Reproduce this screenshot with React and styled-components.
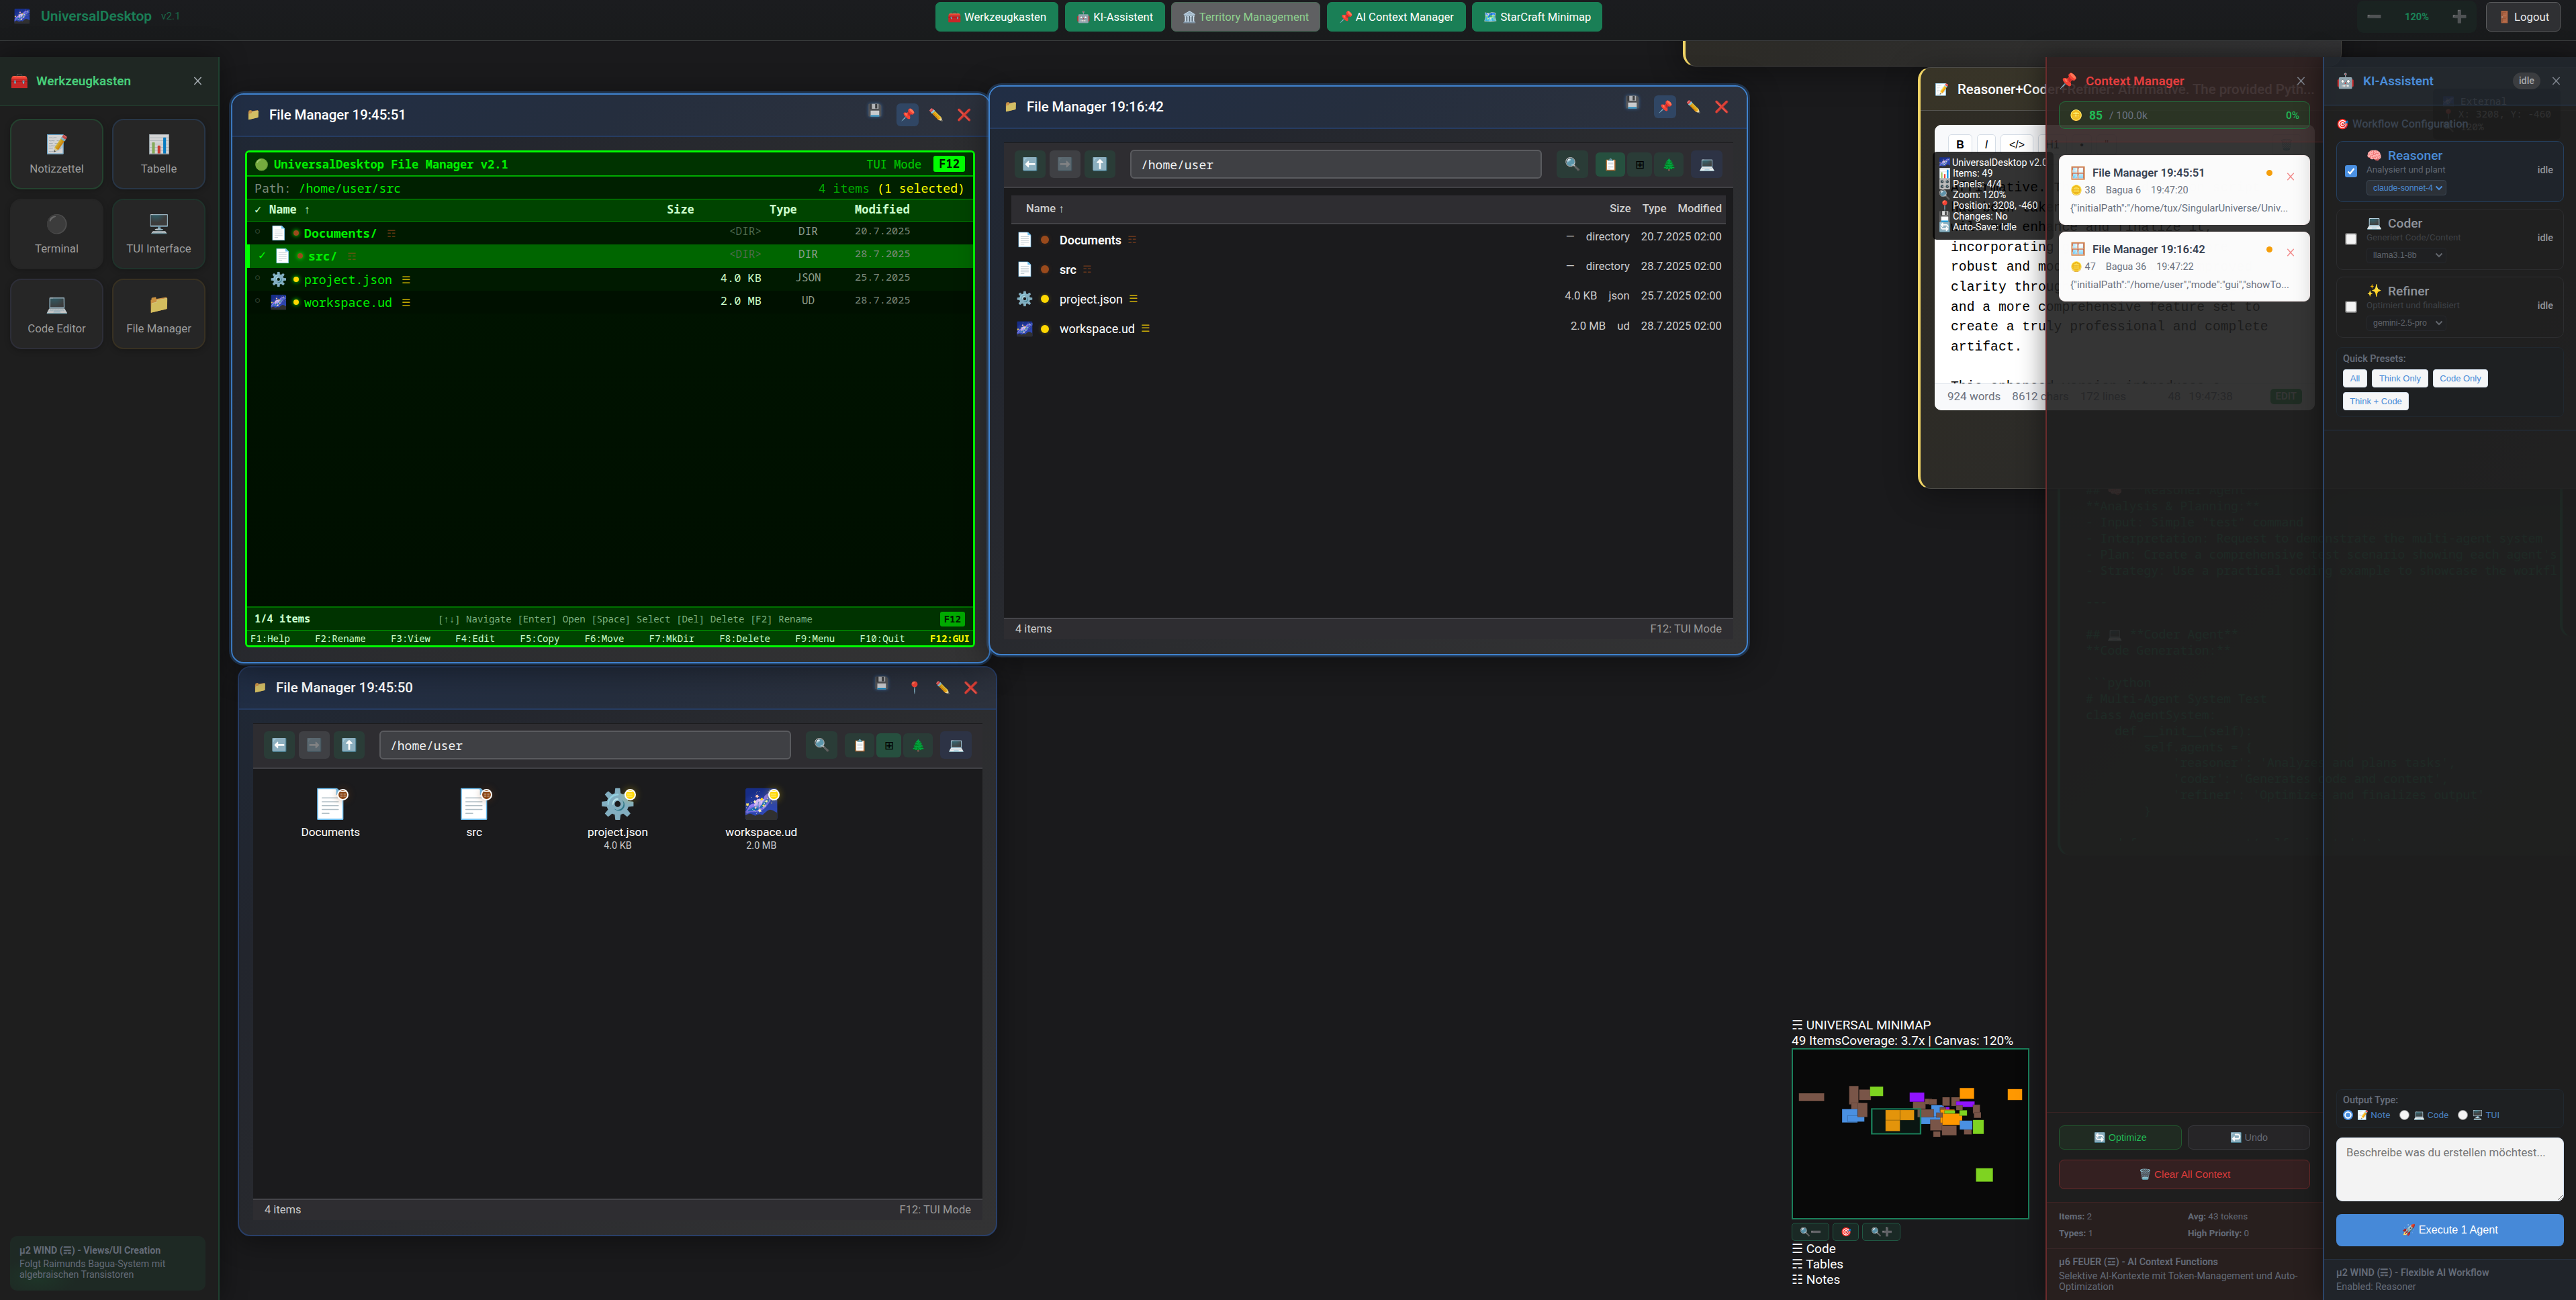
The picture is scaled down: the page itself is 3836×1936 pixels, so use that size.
import React from 'react';
import styled, { createGlobalStyle, css } from 'styled-components';

const SANS = `Roboto, "Liberation Sans", sans-serif`;
const FORM = `"Liberation Sans", Arial, sans-serif`;
const MONO = `"Noto Sans Mono", "DejaVu Sans Mono", monospace`;

const Global = createGlobalStyle`
  *, *::before, *::after { box-sizing: border-box; }
  html, body, #root { height: 100%; margin: 0; }
  body { background: #1a1a1c; color: #fff; font-family: ${SANS}; overflow: hidden; }
  button, input, textarea { font: inherit; color: inherit; margin: 0; }
`;

/* ---------- shell ---------- */
const Screen = styled.div`
  position: relative;
  width: 100%;
  height: 100vh;
  overflow: hidden;
`;
const Canvas = styled.main`
  position: absolute;
  inset: 0;
  overflow: hidden;
`;
const Chrome = styled.div`
  position: absolute;
  inset: 0;
  display: flex;
  flex-direction: column;
  gap: 24px;
`;
const PanelRow = styled.div`
  flex: 1;
  min-height: 0;
  display: flex;
`;
const Spacer = styled.div`
  flex: 1;
`;

/* ---------- top bar ---------- */
const TopBar = styled.header`
  height: 61px;
  display: grid;
  grid-template-columns: 1393px auto 1fr;
  align-items: start;
  background: linear-gradient(180deg, #1b1c1f, #191b1c);
  border-bottom: 1px solid #3a3c3d;
`;
const Brand = styled.div`
  display: flex;
  align-items: center;
  height: 48px;
  padding-left: 20px;
  color: #1a7f56;
  font-size: 21px;
  font-weight: 600;
`;
const BrandIcon = styled.span`
  font-size: 20.5px;
  width: 41px;
`;
const Version = styled.span`
  margin-left: 14px;
  font-size: 15.3px;
  font-weight: 400;
  opacity: 0.75;
`;
const Nav = styled.nav`
  display: flex;
  gap: 9.6px;
  padding-top: 3px;
`;
const NavButton = styled.button`
  height: 44px;
  width: ${(p) => p.$w}px;
  padding: 0;
  border: 1px solid ${(p) => (p.$muted ? '#4a6a58' : '#1a7f56')};
  border-radius: 7px;
  background: ${(p) => (p.$muted ? '#5f6062' : '#1a7f56')};
  color: ${(p) => (p.$muted ? '#8fd18f' : '#fff')};
  font-size: 16.6px;
  white-space: nowrap;
`;
const TopRight = styled.div`
  display: flex;
  justify-content: flex-end;
  gap: 14px;
  padding-right: 23px;
`;
const ZoomBox = styled.div`
  display: flex;
  align-items: center;
  justify-content: space-between;
  width: 178px;
  height: 48px;
  margin-top: 1px;
  padding: 0 14px;
  border-radius: 9px;
  background: #1a2321;
  color: #1a8458;
  font-size: 14.6px;
  font-weight: 700;
`;
const ZoomGlyph = styled.span`
  font-size: 18.5px;
  opacity: 0.75;
`;
const Logout = styled.button`
  width: 111px;
  height: 44px;
  margin-top: 3px;
  padding: 0;
  border: 1px solid #5a5b5d;
  border-radius: 7px;
  background: #2f3033;
  color: #e8e8e8;
  font-size: 16.8px;
`;

/* ---------- toolbox panel ---------- */
const Toolbox = styled.aside`
  width: 327px;
  display: flex;
  flex-direction: column;
  background: #1e1e1e;
  border-right: 2px solid #1f4030;
  box-shadow: 0 0 38px rgba(0, 0, 0, 0.45);
`;
const ToolboxHead = styled.div`
  height: 73px;
  display: flex;
  align-items: center;
  padding: 0 24px 2px 15px;
  background: #1f2723;
  border-bottom: 1px solid #22402f;
  color: #48cf7a;
  font-size: 18.9px;
  font-weight: 600;
`;
const HeadIcon = styled.span`
  font-size: ${(p) => p.$size || 22}px;
  width: ${(p) => p.$w}px;
  font-weight: 400;
`;
const Cross = styled.svg`
  width: ${(p) => p.$s || 14}px;
  height: ${(p) => p.$s || 14}px;
  flex: none;
  margin-left: ${(p) => (p.$gap ? `${p.$gap}px` : 'auto')};
  stroke: ${(p) => p.$color || '#a4abb0'};
  stroke-width: 1.7;
`;
const ToolGrid = styled.div`
  display: grid;
  grid-template-columns: 139px 139px;
  grid-auto-rows: 105px;
  gap: 14.2px 13px;
  padding: 19px 15px;
`;
const Tool = styled.div`
  display: flex;
  flex-direction: column;
  align-items: center;
  justify-content: center;
  gap: 10px;
  border: 2px solid ${(p) => p.$edge};
  border-radius: 17px;
  background: #262626;
  color: #9c9c9c;
  font-size: 16.8px;
  box-shadow: 0 2px 8px rgba(0, 0, 0, 0.25);
`;
const ToolIcon = styled.span`
  font-size: 27px;
  line-height: 32px;
  opacity: 0.8;
`;
const Motto = styled.div`
  margin: auto 19px 14px 15px;
  padding: 12px 14px 14px;
  height: 81px;
  border-radius: 10px;
  background: radial-gradient(ellipse 45px 22px at 14% 76%, #1e3528, #1e2924 130%);
  color: #646b78;
  font-size: 14.2px;
  line-height: 16px;
  white-space: nowrap;
  b { display: block; line-height: 19px; margin-bottom: 2px; }
`;

/* ---------- windows ---------- */
const WindowFrame = styled.section`
  position: absolute;
  left: ${(p) => p.$x}px;
  top: ${(p) => p.$y}px;
  width: 1131px;
  height: 849px;
  display: flex;
  flex-direction: column;
  border: ${(p) => (p.$pinned ? '2px solid #4083cf' : '2px solid #293f69')};
  border-radius: 19px;
  background: linear-gradient(135deg, #202937 0%, #23262e 22%, #2b2c2f 55%, #333334 100%);
  box-shadow: ${(p) =>
    p.$pinned
      ? '0 0 0 3px rgba(64, 131, 207, 0.28), 0 8px 48px rgba(0, 0, 0, 0.45)'
      : '0 8px 40px rgba(0, 0, 0, 0.4)'};
`;
const WindowHead = styled.div`
  height: 63px;
  flex: none;
  display: flex;
  align-items: center;
  padding: 0 26px 2px 21px;
  border-bottom: 2px solid #263c62;
  border-radius: 17px 17px 0 0;
  background: linear-gradient(135deg, #212e45, #252e3e 50%, #2d323d);
  font-size: 20.4px;
  font-weight: 500;
`;
const FolderIcon = styled.span`
  font-size: 16.5px;
  width: 34px;
  opacity: 0.8;
`;
const WindowTools = styled.div`
  display: flex;
  align-items: center;
  margin-left: auto;
  font-size: 17.5px;
  font-weight: 400;
`;
const SaveGlyph = styled.span`
  padding-bottom: 13px;
  margin-right: 21px;
  opacity: 0.75;
  text-shadow: 0 0 5px rgba(64, 131, 207, 0.8);
`;
const PinGlyph = styled.span`
  display: grid;
  place-items: center;
  width: 33px;
  height: 34px;
  margin-right: 15px;
  border-radius: 6px;
  background: ${(p) => (p.$on ? '#304664' : 'transparent')};
`;
const ToolGlyph = styled.span`
  opacity: 0.9;
  width: 22px;
  & + & { margin-left: 20px; }
`;
const WindowBody = styled.div`
  flex: 1;
  min-height: 0;
  margin: 20px 20px 22px 21px;
  display: flex;
  flex-direction: column;
`;

/* ---------- graphic file manager ---------- */
const Explorer = styled.div`
  flex: 1;
  display: flex;
  flex-direction: column;
  background: #1b1b1d;
`;
const Toolbar = styled.div`
  height: 68px;
  flex: none;
  display: flex;
  align-items: center;
  padding: 0 16px 2px;
  background: #2e2d31;
  border-top: 1px solid #1c1c1e;
  border-bottom: 2px solid #414145;
`;
const BarButton = styled.button`
  display: grid;
  place-items: center;
  padding: 0;
  border: 0;
  border-radius: 6px;
  flex: none;
  width: ${(p) => p.$w || 46}px;
  height: ${(p) => p.$h || 41}px;
  margin-right: ${(p) => p.$mr || 0}px;
  font-size: ${(p) => p.$fs || 19.2}px;
  color: #000;
  background: ${(p) =>
    ({ green: '#2a3c37', on: '#26503f', off: '#3f4044', blue: '#2d3345' })[p.$tone]};
  span { opacity: ${(p) => (p.$tone === 'off' ? 0.35 : 1)}; }
`;
const PathField = styled.input`
  width: 615px;
  height: 43px;
  margin: 0 22px;
  padding: 0 14px;
  border: 2px solid #5a5b5f;
  border-radius: 6px;
  background: #3f4044;
  color: #f2f2f2;
  font-family: ${MONO};
  font-size: 18px;
`;
const StatusBar = styled.div`
  height: 32px;
  flex: none;
  margin-top: auto;
  display: flex;
  justify-content: space-between;
  align-items: center;
  padding: 0 17px 2px;
  background: #2e2d31;
  border-top: 2px solid #45454a;
  color: #ccc;
  font-size: 16.5px;
  span + span { color: #999; }
`;
const Listing = styled.div`
  margin: 11px 11px 0;
`;
const ListHead = styled.div`
  height: 43px;
  display: flex;
  align-items: center;
  gap: 17px;
  padding: 0 6px 2px 22px;
  margin-bottom: 1px;
  background: #2e2d31;
  border-bottom: 2px solid #434347;
  color: #cfcfcf;
  font-size: 16.6px;
  font-weight: 500;
  span:first-child { margin-right: auto; }
`;
const ListRow = styled.div`
  height: 44.2px;
  display: flex;
  align-items: center;
  padding: 0 6px;
  font-size: 18px;
  font-weight: ${(p) => (p.$dir ? 600 : 400)};
`;
const FileLabel = styled.span`
  margin: 0 9px 0 16px;
`;
const RowIcon = styled.span`
  width: 28px;
  margin-right: 10px;
  font-size: 20.8px;
  font-weight: 400;
  text-align: center;
`;
const Dot = styled.i`
  width: ${(p) => p.$d || 12}px;
  height: ${(p) => p.$d || 12}px;
  border-radius: 50%;
  background: ${(p) => p.$c};
  box-shadow: 0 0 6px ${(p) => p.$glow || 'transparent'};
  flex: none;
`;
const Trigram = styled.span`
  color: ${(p) => p.$c};
  font-size: 14.5px;
  font-weight: 400;
  opacity: ${(p) => (p.$dim ? 0.6 : 0.75)};
  margin-left: ${(p) => p.$ml || 0}px;
`;
const RowMeta = styled.span`
  display: flex;
  gap: 17px;
  margin-left: auto;
  padding-bottom: 9px;
  color: #cdcdcd;
  font-size: 16.7px;
  font-weight: 400;
`;
const IconGrid = styled.div`
  display: grid;
  grid-template-columns: repeat(5, 1fr);
  gap: 19.2px;
  padding: 21px 18px;
`;
const IconCell = styled.div`
  display: flex;
  flex-direction: column;
  align-items: center;
  font-size: 17.2px;
  line-height: 21px;
  small { font-size: 14.4px; color: #ccc; line-height: 20px; }
`;
const BigIcon = styled.div`
  position: relative;
  font-size: 43px;
  line-height: 62px;
  height: 63px;
`;
const Badge = styled.span`
  position: absolute;
  right: 0;
  top: 9px;
  width: 17px;
  height: 17px;
  display: grid;
  place-items: center;
  border: 2px solid #fff;
  border-radius: 50%;
  background: ${(p) => p.$c};
  box-shadow: 0 0 12px ${(p) => p.$c}66;
  color: #fff;
  font-size: 10.5px;
  line-height: 1;
`;

/* ---------- text mode file manager ---------- */
const Tui = styled.div`
  flex: 1;
  display: flex;
  flex-direction: column;
  margin: 0 1px 0 -2px;
  border: 3px solid #00ff00;
  border-radius: 6px;
  background: linear-gradient(180deg, #001500, #000e00);
  font-family: ${MONO};
  font-size: 18.2px;
  color: #00f000;
  overflow: hidden;
  white-space: pre;
`;
const TuiBar = styled.div`
  flex: none;
  display: flex;
  align-items: center;
  height: ${(p) => p.$h}px;
  margin-top: ${(p) => (p.$last ? 'auto' : 0)};
  padding: 0 ${(p) => p.$pr ?? 12}px 0 ${(p) => p.$pl ?? 11}px;
  background: ${(p) => p.$bg};
  border-top: ${(p) => p.$top || 'none'};
  border-bottom: ${(p) => p.$bottom || 'none'};
  font-size: ${(p) => p.$fs || 18.2}px;
  justify-content: space-between;
`;
const Ink = styled.span`
  color: ${(p) => p.$c};
  font-weight: ${(p) => (p.$bold ? 700 : 400)};
  font-size: ${(p) => (p.$fs ? `${p.$fs}px` : 'inherit')};
`;
const TuiTitle = styled.b`
  display: flex;
  gap: 8px;
  i { font-style: normal; font-size: 17px; opacity: 0.95; }
`;
const TuiMode = styled.span`
  margin: 0 18px 0 auto;
  color: #00c000;
  font-weight: 500;
`;
const Key = styled.b`
  padding: 0 ${(p) => p.$px || 8}px;
  line-height: ${(p) => p.$h}px;
  border-radius: 3px;
  background: ${(p) => p.$bg};
  color: #001a00;
`;
const Columns = styled.div`
  display: grid;
  grid-template-columns: 22px 1fr 150px 139px 176px;
  height: ${(p) => p.$h}px;
  flex: none;
  padding-left: ${(p) => (p.$sel ? 13 : 11)}px;
  background: ${(p) => p.$bg};
  border-left: ${(p) => (p.$sel ? '4px solid #00ff00' : 'none')};
  border-bottom: ${(p) => p.$line || 'none'};
  ${(p) =>
    p.$head &&
    css`
      align-items: center;
      padding-bottom: 3px;
      color: #ccffcc;
      font-size: 17px;
      font-weight: 700;
    `}
`;
const TuiCell = styled.span`
  padding-top: 3px;
  text-align: ${(p) => p.$align || 'left'};
  color: ${(p) => p.$c};
  font-size: ${(p) => p.$fs}px;
`;
const TuiHeadCell = styled.span`
  padding-left: ${(p) => p.$pl || 0}px;
`;
const TuiName = styled.span`
  display: flex;
  align-items: center;
  gap: 8px;
  font-weight: ${(p) => (p.$dir ? 700 : 400)};
`;
const TuiIcon = styled.span`
  width: 28px;
  text-align: center;
  font-family: ${SANS};
  font-size: 20.5px;
  font-weight: 400;
`;

/* ---------- notes ---------- */
const NoteFrame = styled.section`
  position: absolute;
  left: ${(p) => p.$x}px;
  top: ${(p) => p.$y}px;
  width: ${(p) => p.$w}px;
  height: ${(p) => p.$h}px;
  border: 1px solid #4c4b47;
  border-left: 4px solid #efd365;
  border-radius: 19px;
  background: linear-gradient(120deg, #2f2c24 0%, #2c2b28 35%, #343436 100%);
  box-shadow: 0 8px 48px rgba(0, 0, 0, 0.4);
`;
const NoteHead = styled.div`
  height: 64px;
  display: flex;
  align-items: center;
  padding-left: 21px;
  border-bottom: 1px solid #55544f;
  border-radius: 15px 15px 0 0;
  background: rgba(239, 211, 101, 0.05);
  font-size: 20.4px;
  font-weight: 500;
  white-space: nowrap;
`;
const NoteCard = styled.div`
  width: 566px;
  height: 425px;
  margin: 21px 0 0 21px;
  display: flex;
  flex-direction: column;
  border-radius: 10px;
  background: #fff;
  overflow: hidden;
  color: #000;
`;
const NoteTools = styled.div`
  height: 60px;
  flex: none;
  display: flex;
  align-items: center;
  gap: 7px;
  padding: 0 20px;
  background: #f8f9fb;
  border-bottom: 1px solid #dde3ea;
`;
const NoteButton = styled.span`
  height: 31px;
  width: ${(p) => p.$w}px;
  display: grid;
  place-items: center;
  border: 1px solid #d5dde6;
  border-radius: 5px;
  background: #fff;
  font-size: 16px;
  font-family: ${FORM};
  margin-left: ${(p) => (p.$push ? 'auto' : 0)};
`;
const NoteText = styled.pre`
  flex: 1;
  min-height: 0;
  margin: 0;
  padding: 20px 24px 0;
  overflow: hidden;
  font-family: "Liberation Mono", monospace;
  font-size: 19.7px;
  line-height: 29.6px;
`;
const NoteFoot = styled.div`
  height: 40px;
  flex: none;
  display: flex;
  align-items: center;
  padding: 0 19px 3px;
  background: #f8f9fb;
  border-top: 1px solid #dde3ea;
  color: #6b7280;
  font-size: 17px;
  span { margin-right: 17px; }
  span:nth-child(4) { margin: 0 12px 0 45px; }
`;
const EditTag = styled.b`
  margin-left: auto;
  padding: 0 8px;
  line-height: 23px;
  border-radius: 5px;
  background: #22a04a;
  color: #fff;
  font-size: 15px;
  font-weight: 500;
`;
const CodeFrame = styled.section`
  position: absolute;
  left: ${(p) => p.$x}px;
  top: ${(p) => p.$y}px;
  width: 1131px;
  height: ${(p) => p.$h}px;
  padding: ${(p) => p.$pad || '0'};
  border-left: 4px solid #1a7f56;
  border-bottom: 1px solid #2f3a34;
  border-radius: 19px;
  background: linear-gradient(135deg, #1e1e1e, #20302a 60%, #1e1e1e);
  overflow: hidden;
`;
const Code = styled.pre`
  height: 100%;
  margin: 0;
  overflow: hidden;
  font-family: ${MONO};
  font-size: 18px;
  line-height: 23.9px;
  color: #1a8a5c;
`;
const HudBox = styled.div`
  position: absolute;
  left: ${(p) => p.$x}px;
  top: ${(p) => p.$y}px;
  width: ${(p) => p.$w}px;
  height: ${(p) => p.$h}px;
  padding: ${(p) => p.$pad};
  border-radius: 6px;
  background: rgba(0, 0, 0, 0.8);
  font-family: ${(p) => (p.$mono ? MONO : SANS)};
  font-size: 14.4px;
  line-height: ${(p) => p.$lh}px;
  color: ${(p) => (p.$mono ? '#c8ccd4' : '#fff')};
  white-space: nowrap;
`;
const HudLine = styled.div`
  display: flex;
  height: ${(p) => p.$h}px;
  span { width: ${(p) => p.$icon}px; }
`;

/* ---------- minimap ---------- */
const Minimap = styled.section`
  position: absolute;
  left: 2668px;
  top: 1515px;
  width: 354px;
  font-size: 19px;
  line-height: 23px;
  white-space: nowrap;
`;
const MapSvg = styled.svg`
  display: block;
  width: 354px;
  height: 255px;
  border: 2px solid #1a7f5a;
  background: #090909;
`;
const MapButtons = styled.div`
  display: flex;
  gap: 5px;
  margin: 5px 0 0;
`;
const MapButton = styled.span`
  width: ${(p) => p.$w}px;
  height: 27px;
  display: grid;
  place-items: center;
  border: 1px solid #205843;
  border-radius: 5px;
  background: #1a2925;
  font-size: 13px;
`;

/* ---------- context panel ---------- */
const SidePanel = styled.aside`
  width: ${(p) => p.$w}px;
  display: flex;
  flex-direction: column;
  flex: none;
  border-left: 2px solid ${(p) => p.$edge};
  background: rgba(31, 31, 31, 0.9);
  box-shadow: -4px 0 34px rgba(0, 0, 0, 0.4);
`;
const ContextHead = styled.div`
  height: 127px;
  flex: none;
  padding: 12px 19px 0 18px;
  background: rgba(229, 62, 62, 0.08);
  border-bottom: 1px solid #632b2c;
`;
const PanelTitle = styled.div`
  display: flex;
  align-items: center;
  height: ${(p) => p.$h}px;
  padding-right: ${(p) => p.$pr || 0}px;
  color: ${(p) => p.$c};
  font-size: 19px;
  font-weight: 600;
`;
const TokenBox = styled.div`
  height: 41px;
  margin-top: 7px;
  display: flex;
  align-items: center;
  padding: 0 15px;
  border: 1px solid #22713c;
  border-radius: 9px;
  background: rgba(34, 120, 50, 0.22);
  color: #22b855;
  font-size: 15.4px;
  span:first-child { width: 29px; }
  b { font-size: 17.5px; font-weight: 700; }
  i { margin-left: 10px; font-style: normal; color: #6b7280; }
  em { margin-left: auto; font-style: normal; font-weight: 500; }
`;
const ContextCards = styled.div`
  flex: 1;
  display: flex;
  flex-direction: column;
  gap: 10.4px;
  padding: 19px 19px 0 18px;
`;
const ContextCard = styled.article`
  height: 103.6px;
  padding: 13px 16px;
  border-radius: 9px;
  border: 1px solid #fdf0f0;
  background: rgba(255, 255, 255, 0.98);
  color: #6b7280;
`;
const CardTitle = styled.div`
  display: flex;
  align-items: center;
  height: 25px;
  color: #374151;
  font-size: 16.7px;
  font-weight: 600;
  > span { width: 33px; font-size: 18.5px; font-weight: 400; }
  i { margin-left: auto; }
  svg { margin: 10px 6px 0 21px; }
`;
const CardMeta = styled.div`
  display: flex;
  gap: 15px;
  height: 27px;
  align-items: center;
  font-size: 14.4px;
`;
const CardJson = styled.div`
  white-space: nowrap;
  font-size: 15px;
  line-height: 26px;
  letter-spacing: ${(p) => p.$track || 0}px;
`;
const ContextActions = styled.div`
  height: 134px;
  flex: none;
  display: grid;
  grid-template-columns: 1fr 1fr;
  grid-template-rows: 36px 44px;
  gap: 15px 9px;
  padding: 19px 19px 0 18px;
  border-top: 1px solid #3b2424;
`;
const ActionButton = styled.button`
  padding: 0;
  border: 1px solid ${(p) => p.$edge};
  border-radius: 8px;
  background: ${(p) => p.$bg};
  color: ${(p) => p.$c};
  font-family: ${FORM};
  font-size: ${(p) => p.$fs || 14.4}px;
  grid-column: ${(p) => (p.$wide ? '1 / -1' : 'auto')};
`;
const Stats = styled.div`
  height: 69px;
  flex: none;
  display: grid;
  grid-template-columns: 192px 1fr;
  grid-auto-rows: 25px;
  padding: 8px 18px;
  border-top: 1px solid #3f2424;
  background: #281f1e;
  color: #646b78;
  font-size: 13.5px;
  line-height: 25px;
`;
const PanelFoot = styled.div`
  height: ${(p) => p.$h}px;
  flex: none;
  padding: 10px 18px 0;
  border-top: 1px solid ${(p) => p.$line};
  background: ${(p) => p.$bg};
  color: #646b78;
  font-size: 14.4px;
  line-height: 16.3px;
  b { display: block; line-height: 20px; margin-bottom: 3px; font-weight: 600; }
`;

/* ---------- assistant panel ---------- */
const AssistantHead = styled.div`
  height: 72px;
  flex: none;
  padding: 0 23px 0 18px;
  background: rgba(74, 144, 226, 0.07);
  border-bottom: 1px solid #28405f;
`;
const IdlePill = styled.span`
  margin-left: auto;
  width: 41px;
  line-height: 25px;
  border-radius: 13px;
  background: #3b3d40;
  color: #a3a6aa;
  font-size: 14.4px;
  font-weight: 500;
  text-align: center;
`;
const Workflow = styled.div`
  height: 484px;
  flex: none;
  padding: 17px 18px 0;
  border-bottom: 1px solid #223247;
`;
const WorkflowTitle = styled.div`
  height: 36px;
  line-height: 22px;
  color: #3a4452;
  font-size: 16.4px;
  font-weight: 500;
  span { display: inline-block; width: 24px; font-size: 15px; }
`;
const AgentCard = styled.div`
  height: 91px;
  margin-bottom: 9.8px;
  display: flex;
  padding: 8px 15px 0 12px;
  border: 1px solid ${(p) => (p.$on ? '#25405f' : '#2c2d2f')};
  border-radius: 10px;
  background: ${(p) => (p.$on ? '#1f242b' : 'rgba(34, 34, 34, 0.6)')};
`;
const CheckBox = styled.span`
  width: 18px;
  height: 18px;
  margin: 27px 14px 0 0;
  display: grid;
  place-items: center;
  border: ${(p) => (p.$on ? 'none' : '2px solid #767676')};
  border-radius: 3px;
  background: ${(p) => (p.$on ? '#4a90e2' : '#f4f4f4')};
`;
const AgentInfo = styled.div`
  flex: 1;
`;
const AgentName = styled.div`
  display: flex;
  height: 25px;
  align-items: center;
  color: ${(p) => (p.$on ? '#4a8cd8' : '#8f949c')};
  font-size: 19.2px;
  font-weight: 500;
  span { width: 32px; font-size: 18.5px; }
`;
const AgentHint = styled.div`
  height: 24px;
  line-height: 18px;
  color: ${(p) => (p.$on ? '#626975' : '#3f4247')};
  font-size: 13.3px;
`;
const ModelSelect = styled.div`
  width: 119px;
  height: 23px;
  display: flex;
  align-items: center;
  justify-content: space-between;
  padding: 0 4px 0 9px;
  border: 1px solid ${(p) => (p.$on ? '#3b4653' : '#26282c')};
  border-radius: 4px;
  background: ${(p) => (p.$on ? '#2c3138' : '#1f2022')};
  color: ${(p) => (p.$on ? '#4a8cd8' : '#60646b')};
  font-family: ${FORM};
  font-size: 12.4px;
`;
const AgentState = styled.span`
  padding-top: 26px;
  color: #8f949c;
  font-size: 14.4px;
  font-weight: 500;
`;
const BoxedGroup = styled.div`
  border: 1px solid #20282f;
  border-radius: 8px;
  padding: 6px 9px;
  margin: ${(p) => p.$m || 0};
  height: ${(p) => p.$h}px;
  background: #1e2022;
`;
const GroupLabel = styled.div`
  color: #646b78;
  font-size: 14.4px;
  font-weight: 600;
  line-height: ${(p) => p.$lh}px;
  margin-bottom: ${(p) => p.$mb || 0}px;
`;
const Presets = styled.div`
  display: flex;
  flex-wrap: wrap;
  gap: 7px;
  width: 260px;
`;
const Preset = styled.button`
  width: ${(p) => p.$w}px;
  height: 27px;
  padding: 0;
  border: 1px solid #dbe6f2;
  border-radius: 4px;
  background: #f5f6f7;
  color: #4a8cd8;
  font-family: ${FORM};
  font-size: 13px;
`;
const AssistantForm = styled.div`
  margin-top: auto;
  padding: 0 18px;
  display: flex;
  flex-direction: column;
`;
const Radios = styled.div`
  display: flex;
  color: #4a80c0;
  font-size: 13.6px;
  line-height: 22px;
`;
const Radio = styled.label`
  display: flex;
  align-items: center;
  gap: 6px;
  margin-right: 14px;
  &::before {
    content: '';
    width: 15px;
    height: 15px;
    border-radius: 50%;
    border: ${(p) => (p.$on ? '2px solid #4a90e2' : '1px solid #888')};
    box-shadow: ${(p) => (p.$on ? 'inset 0 0 0 2px #fff' : 'none')};
    background: ${(p) => (p.$on ? '#4a90e2' : '#f4f4f4')};
  }
`;
const Prompt = styled.textarea`
  height: 95px;
  margin: 14px 0 19px;
  padding: 11px 14px;
  border: 1px solid #d6e4f4;
  border-radius: 9px;
  background: #f3f3f3;
  font-size: 16.8px;
  &::placeholder { color: #757575; }
`;
const Execute = styled.button`
  height: 48px;
  margin-bottom: 19px;
  padding: 0 0 2px;
  border: 0;
  border-radius: 8px;
  background: #4689d8;
  color: #fff;
  font-family: ${FORM};
  font-size: 16.2px;
`;

/* ---------- data ---------- */
const EARTH = '#9a4a1c';
const GOLD = '#ffd800';

const navItems = [
  ['🧰 Werkzeugkasten', 183],
  ['🤖 KI-Assistent', 149],
  ['🏛️ Territory Management', 222, true],
  ['📌 AI Context Manager', 207],
  ['🗺️ StarCraft Minimap', 194],
];

const tools = [
  ['📝', 'Notizzettel', '#24422f'],
  ['📊', 'Tabelle', '#283647'],
  ['⚫', 'Terminal', '#252525'],
  ['🖥️', 'TUI Interface', '#1f332b'],
  ['💻', 'Code Editor', '#2d2e38'],
  ['📁', 'File Manager', '#383122'],
];

const files = [
  { icon: '📄', name: 'Documents', dir: true, type: 'directory', date: '20.7.2025' },
  { icon: '📄', name: 'src', dir: true, type: 'directory', date: '28.7.2025', selected: true },
  { icon: '⚙️', name: 'project.json', size: '4.0 KB', type: 'json', date: '25.7.2025' },
  { icon: '🌌', name: 'workspace.ud', size: '2.0 MB', type: 'ud', date: '28.7.2025' },
];

const fKeys = ['F1:Help', 'F2:Rename', 'F3:View', 'F4:Edit', 'F5:Copy', 'F6:Move', 'F7:MkDir', 'F8:Delete', 'F9:Menu', 'F10:Quit'];

const BROWN = '#795548';
const BLUE = '#4a90e2';
const LIME = '#7ed321';
const PURPLE = '#9013fe';
const ORANGE = '#ff9800';
const mapItems = [
  [23, 198, 100, 36, BROWN], [221, 165, 37, 84, BROWN], [229, 242, 40, 32, BROWN],
  [193, 270, 61, 61, BLUE], [215, 300, 66, 27, BLUE], [254, 242, 39, 64, BROWN],
  [260, 181, 47, 48, BROWN], [303, 168, 52, 43, LIME],
  [472, 236, 50, 34, BROWN], [459, 195, 58, 42, PURPLE],
  [519, 223, 28, 25, BROWN], [536, 225, 30, 25, BROWN],
  [504, 304, 90, 34, BLUE], [544, 252, 50, 52, BLUE], [490, 271, 64, 36, BROWN],
  [586, 260, 30, 40, PURPLE], [578, 262, 24, 20, BROWN],
  [588, 216, 29, 39, BROWN], [623, 216, 33, 40, BROWN], [540, 318, 50, 49, BROWN],
  [586, 345, 58, 44, BROWN], [552, 371, 28, 25, BROWN],
  [580, 272, 56, 60, ORANGE], [588, 290, 78, 52, ORANGE], [564, 286, 25, 22, BROWN],
  [596, 276, 42, 14, LIME], [642, 235, 73, 26, PURPLE], [642, 253, 26, 22, BROWN],
  [656, 174, 57, 50, ORANGE], [845, 179, 57, 50, ORANGE], [655, 275, 30, 25, LIME],
  [708, 250, 28, 40, BROWN], [712, 284, 28, 26, BROWN],
  [673, 360, 30, 25, BROWN], [656, 322, 50, 41, BLUE], [708, 319, 43, 64, LIME],
  [720, 538, 67, 61, LIME],
  [364, 274, 57, 46, ORANGE], [421, 274, 56, 46, ORANGE], [364, 320, 57, 50, ORANGE],
];

const codeText = `## 🧠 **Reasoner Agent**
**Analysis & Planning:**
- Input: Simple "test" command
- Interpretation: Request to demonstrate the multi-agent system
- Plan: Create a comprehensive test scenario showing each agent's
- Strategy: Use a practical coding example to showcase the workfl

---

## 💻 **Coder Agent**
**Code Generation:**

\`\`\`python
# Multi-Agent System Test
class AgentSystem:
    def __init__(self):
        self.agents = {
            'reasoner': 'Analyzes and plans tasks',
            'coder': 'Generates code and content',
            'refiner': 'Optimizes and finalizes output'
        }

    def process_request(self, input_data):`;

const noteText = `Affirmative. The provided Python script
has been taken as a strong foundation. I
will now enhance and finalize it,
incorporating greater depth, a more
robust and modular structure, improved
clarity through detailed documentation,
and a more comprehensive feature set to
create a truly professional and complete
artifact.

This enhanced version introduces a`;

const hudLines = [
  ['🌌', 'UniversalDesktop v2.0'],
  ['📊', 'Items: 49'],
  ['🎛️', 'Panels: 4/4'],
  ['🔍', 'Zoom: 120%'],
  ['📍', 'Position: 3208, -460'],
  ['💾', 'Changes: No'],
  ['🔄', 'Auto-Save: Idle'],
];

const contextItems = [
  ['File Manager 19:45:51', '38', 'Bagua 6', '19:47:20', '{"initialPath":"/home/tux/SingularUniverse/Univ...'],
  ['File Manager 19:16:42', '47', 'Bagua 36', '19:47:22', '{"initialPath":"/home/user","mode":"gui","showTo...'],
];

const agents = [
  ['🧠', 'Reasoner', 'Analysiert und plant', 'claude-sonnet-4', true],
  ['💻', 'Coder', 'Generiert Code/Content', 'llama3.1-8b', false],
  ['✨', 'Refiner', 'Optimiert und finalisiert', 'gemini-2.5-pro', false],
];

/* ---------- components ---------- */
function CloseMark({ size, gap, color }) {
  return (
    <Cross viewBox="0 0 14 14" $s={size} $gap={gap} $color={color}>
      <path d="M1.500 1 12.500 13M12.500 1 1.500 13" fill="none" />
    </Cross>
  );
}

function FileWindow({ x, y, title, pinned, children }) {
  return (
    <WindowFrame $x={x} $y={y} $pinned={pinned}>
      <WindowHead>
        <FolderIcon>📁</FolderIcon>
        {title}
        <WindowTools>
          <SaveGlyph>💾</SaveGlyph>
          <PinGlyph $on={pinned}>{pinned ? '📌' : '📍'}</PinGlyph>
          <ToolGlyph>✏️</ToolGlyph>
          <ToolGlyph>❌</ToolGlyph>
        </WindowTools>
      </WindowHead>
      <WindowBody>{children}</WindowBody>
    </WindowFrame>
  );
}

function FileExplorer({ view, children }) {
  return (
    <Explorer>
      <Toolbar>
        <BarButton $tone="green" $mr={6}><span>⬅️</span></BarButton>
        <BarButton $tone="off" $mr={6}><span>➡️</span></BarButton>
        <BarButton $tone="green"><span>⬆️</span></BarButton>
        <PathField defaultValue="/home/user" />
        <BarButton $tone="green" $w={47} $mr={11}><span>🔍</span></BarButton>
        <BarButton $tone={view === 'list' ? 'on' : 'green'} $w={44} $h={36} $fs={17} $mr={3}><span>📋</span></BarButton>
        <BarButton $tone={view === 'grid' ? 'on' : 'green'} $w={37} $h={36} $fs={17} $mr={3}><span>⊞</span></BarButton>
        <BarButton $tone="green" $w={44} $h={36} $fs={17} $mr={11}><span>🌲</span></BarButton>
        <BarButton $tone="blue" $w={47}><span>💻</span></BarButton>
      </Toolbar>
      {children}
      <StatusBar><span>4 items</span><span>F12: TUI Mode</span></StatusBar>
    </Explorer>
  );
}

function ListView() {
  return (
    <Listing>
      <ListHead><span>Name ↑</span><span>Size</span><span>Type</span><span>Modified</span></ListHead>
      {files.map((f) => (
        <ListRow key={f.name} $dir={f.dir}>
          <RowIcon>{f.icon}</RowIcon>
          <Dot $c={f.dir ? EARTH : GOLD} $glow={f.dir ? '#9a4a1c55' : '#ffd80044'} />
          <FileLabel>{f.name}</FileLabel>
          <Trigram $c={f.dir ? EARTH : GOLD} $dim={f.dir}>{f.dir ? '☶' : '☰'}</Trigram>
          <RowMeta><span>{f.size || '—'}</span><span>{f.type}</span><span>{f.date} 02:00</span></RowMeta>
        </ListRow>
      ))}
    </Listing>
  );
}

function GridView() {
  return (
    <IconGrid>
      {files.map((f) => (
        <IconCell key={f.name}>
          <BigIcon>
            {f.icon}
            <Badge $c={f.dir ? '#8b4513' : '#ffd700'}>{f.dir ? '☶' : '☰'}</Badge>
          </BigIcon>
          {f.name}
          {f.size && <small>{f.size}</small>}
        </IconCell>
      ))}
    </IconGrid>
  );
}

const rowTone = ['#001a00', '#006600', '#001a00', '#001000'];

function TuiManager() {
  return (
    <Tui>
      <TuiBar $h={36} $bg="#003300" $bottom="2px solid #00aa00" $fs={17.1}>
        <TuiTitle><i>🟢</i>UniversalDesktop File Manager v2.1</TuiTitle>
        <TuiMode>TUI Mode</TuiMode>
        <Key $h={24} $bg="#00ff00">F12</Key>
      </TuiBar>
      <TuiBar $h={34} $bg="#002000" $bottom="1px solid #00aa00">
        <span><Ink $c="#7c8a7c">Path: </Ink>/home/user/src</span>
        <span><Ink $c="#00aa00">4 items </Ink><Ink $c="#ffff00">(1 selected)</Ink></span>
      </TuiBar>
      <Columns $head $h={33} $bg="#004400" $line="1px solid #008800">
        <span>✓</span><span>Name ↑</span>
        <TuiHeadCell $pl={9}>Size</TuiHeadCell><TuiHeadCell $pl={12}>Type</TuiHeadCell><TuiHeadCell>Modified</TuiHeadCell>
      </Columns>
      {files.map((f, i) => (
        <Columns key={f.name} $h={34.3} $bg={rowTone[i]} $sel={f.selected}>
          <TuiCell $fs={f.selected ? 18 : 15} $c={f.selected ? '#00ff00' : '#4a5a4a'}>{f.selected ? '✓' : '○'}</TuiCell>
          <TuiName $dir={f.dir}>
            <TuiIcon>{f.icon}</TuiIcon>
            <Dot $d={8} $c={f.dir ? EARTH : GOLD} $glow="#00ff00" />
            {f.dir ? `${f.name}/` : f.name}
            <Trigram $ml={6} $c={f.dir ? EARTH : GOLD} $dim={f.dir}>{f.dir ? '☶' : '☰'}</Trigram>
          </TuiName>
          <TuiCell $align="right" $fs={f.size ? 17 : 16} $c={f.size ? '#ccffcc' : '#4f6b4f'}>{f.size || '<DIR>'}</TuiCell>
          <TuiCell $align="center" $fs={16} $c="#8f9f8f">{f.dir ? 'DIR' : f.type.toUpperCase()}</TuiCell>
          <TuiCell $fs={15.3} $c="#7c8a7c">{f.date}</TuiCell>
        </Columns>
      ))}
      <TuiBar $last $h={35} $bg="#003300" $top="2px solid #007000" $fs={14.1}>
        <Ink $bold $c="#ccffcc" $fs={15.4}>1/4 items</Ink>
        <Ink $c="#7fb27f">[↑↓] Navigate [Enter] Open [Space] Select [Del] Delete [F2] Rename</Ink>
        <Key $h={22} $px={6} $bg="#00aa00">F12</Key>
      </TuiBar>
      <TuiBar $h={23} $bg="#004400" $top="1px solid #00aa00" $fs={14} $pl={5} $pr={5}>
        {fKeys.map((k) => <Ink key={k} $c="#ccffcc">{k}</Ink>)}
        <Ink $bold $c="#ffff00">F12:GUI</Ink>
      </TuiBar>
    </Tui>
  );
}

function ReasonerNote() {
  return (
    <NoteFrame $x={2856} $y={100} $w={1131} $h={628}>
      <NoteHead><HeadIcon $size={17} $w={34}>📝</HeadIcon>Reasoner+Coder+Refiner: Affirmative. The provided Pyth...</NoteHead>
      <NoteCard>
        <NoteTools>
          <NoteButton $w={36}><b>B</b></NoteButton>
          <NoteButton $w={28}><i>I</i></NoteButton>
          <NoteButton $w={49}>&lt;/&gt;</NoteButton>
          <NoteButton $w={43}>H1</NoteButton>
          <NoteButton $w={30}>•</NoteButton>
          <NoteButton $w={30}>"</NoteButton>
          <NoteButton $w={44} $push>🗑️</NoteButton>
        </NoteTools>
        <NoteText>{noteText}</NoteText>
        <NoteFoot>
          <span>924 words</span><span>8612 chars</span><span>172 lines</span><span>48</span><span>19:47:38</span>
          <EditTag>EDIT</EditTag>
        </NoteFoot>
      </NoteCard>
    </NoteFrame>
  );
}

function UniversalMinimap() {
  return (
    <Minimap>
      <div>☴ UNIVERSAL MINIMAP</div>
      <div>49 ItemsCoverage: 3.7x | Canvas: 120%</div>
      <MapSvg viewBox="0 0 925 764" preserveAspectRatio="none">
        {mapItems.map(([x, y, w, h, c], i) => (
          <rect key={i} x={x} y={y} width={w} height={h} fill={c} stroke="#000" strokeOpacity="0.25" strokeWidth="2" />
        ))}
        <rect x="310" y="269" width="192" height="113" fill="#1a7f5a" fillOpacity="0.12" stroke="#1a7f5a" strokeWidth="6" />
      </MapSvg>
      <MapButtons>
        <MapButton $w={56}>🔍➖</MapButton>
        <MapButton $w={39}>🎯</MapButton>
        <MapButton $w={57}>🔍➕</MapButton>
      </MapButtons>
      <div>☰ Code</div>
      <div>☴ Tables</div>
      <div>☷ Notes</div>
    </Minimap>
  );
}

function ContextManager() {
  return (
    <SidePanel $w={413} $edge="#6a2b2c">
      <ContextHead>
        <PanelTitle $h={47} $pr={7} $c="#e53e3e"><HeadIcon $w={40}>📌</HeadIcon>Context Manager<CloseMark size={13} color="#7d838c" /></PanelTitle>
        <TokenBox><span>🪙</span><b>85</b><i>/ 100.0k</i><em>0%</em></TokenBox>
      </ContextHead>
      <ContextCards>
        {contextItems.map(([title, tokens, bagua, time, json]) => (
          <ContextCard key={title}>
            <CardTitle><span>🪟</span>{title}<Dot $d={9} $c="#f59e0b" /><CloseMark size={12} color="#f28b8b" /></CardTitle>
            <CardMeta><span>🪙 {tokens}</span><span>{bagua}</span><span>{time}</span></CardMeta>
            <CardJson>{json}</CardJson>
          </ContextCard>
        ))}
      </ContextCards>
      <ContextActions>
        <ActionButton $edge="#22592f" $bg="#202b22" $c="#22b855">🔄 Optimize</ActionButton>
        <ActionButton $edge="#3b3b40" $bg="#262527" $c="#666b75">↩️ Undo</ActionButton>
        <ActionButton $wide $fs={15.2} $edge="#6b2a2b" $bg="#342021" $c="#dc3c3c">🗑️ Clear All Context</ActionButton>
      </ContextActions>
      <Stats>
        <span><b>Items:</b> 2</span><span><b>Avg:</b> 43 tokens</span>
        <span><b>Types:</b> 1</span><span><b>High Priority:</b> 0</span>
      </Stats>
      <PanelFoot $h={77} $bg="#281f1e" $line="#382627">
        <b>µ6 FEUER (☲) - AI Context Functions</b>
        Selektive AI-Kontexte mit Token-Management und Auto-Optimization
      </PanelFoot>
    </SidePanel>
  );
}

function Assistant() {
  return (
    <SidePanel $w={377} $edge="#2b4468">
      <AssistantHead>
        <PanelTitle $h={71} $c="#4a8cd8"><HeadIcon $w={40}>🤖</HeadIcon>KI-Assistent<IdlePill>idle</IdlePill><CloseMark size={13} gap={17} color="#7d838c" /></PanelTitle>
      </AssistantHead>
      <Workflow>
        <WorkflowTitle><span>🎯</span>Workflow Configuration</WorkflowTitle>
        {agents.map(([icon, name, hint, model, on]) => (
          <AgentCard key={name} $on={on}>
            <CheckBox $on={on}>
              {on && <svg width="14" height="14" viewBox="0 0 14 14"><path d="M2.5 7.5 5.5 10.5 11.5 3" fill="none" stroke="#fff" strokeWidth="2.4" /></svg>}
            </CheckBox>
            <AgentInfo>
              <AgentName $on={on}><span>{icon}</span>{name}</AgentName>
              <AgentHint $on={on}>{hint}</AgentHint>
              <ModelSelect $on={on}>
                {model}
                <svg width="12" height="8" viewBox="0 0 12 8"><path d="M1.5 1.5 6 6 10.500 1.500" fill="none" stroke="currentColor" strokeWidth="2.2" /></svg>
              </ModelSelect>
            </AgentInfo>
            <AgentState>idle</AgentState>
          </AgentCard>
        ))}
        <BoxedGroup $h={104} $m="14px 0 0">
          <GroupLabel $lh={21} $mb={5}>Quick Presets:</GroupLabel>
          <Presets>
            <Preset $w={36}>All</Preset><Preset $w={84}>Think Only</Preset><Preset $w={82}>Code Only</Preset><Preset $w={98}>Think + Code</Preset>
          </Presets>
        </BoxedGroup>
      </Workflow>
      <AssistantForm>
        <BoxedGroup $h={58}>
          <GroupLabel $lh={20}>Output Type:</GroupLabel>
          <Radios><Radio $on>📝 Note</Radio><Radio>💻 Code</Radio><Radio>🖥️ TUI</Radio></Radios>
        </BoxedGroup>
        <Prompt placeholder="Beschreibe was du erstellen möchtest..." />
        <Execute>🚀 Execute 1 Agent</Execute>
      </AssistantForm>
      <PanelFoot $h={61} $bg="#20242a" $line="#26313f">
        <b>µ2 WIND (☴) - Flexible AI Workflow</b>
        Enabled: Reasoner
      </PanelFoot>
    </SidePanel>
  );
}

export default function App() {
  return (
    <Screen>
      <Global />
      <Canvas>
        <CodeFrame $x={3064} $y={640} $h={634} $pad="78px 0 21px 38px"><Code>{codeText}</Code></CodeFrame>
        <CodeFrame $x={3812} $y={640} $h={309} />
        <NoteFrame $x={2506} $y={-400} $w={981} $h={499} />
        <ReasonerNote />
        <FileWindow x={354} y={992} title="File Manager 19:45:50">
          <FileExplorer view="grid"><GridView /></FileExplorer>
        </FileWindow>
        <FileWindow x={344} y={139} title="File Manager 19:45:51" pinned><TuiManager /></FileWindow>
        <FileWindow x={1472} y={127} title="File Manager 19:16:42" pinned>
          <FileExplorer view="list"><ListView /></FileExplorer>
        </FileWindow>
        <HudBox $x={2878} $y={226} $w={180} $h={131} $lh={16} $pad="9px">
          {hudLines.map(([icon, text]) => <HudLine key={text} $h={16} $icon={21}><span>{icon}</span>{text}</HudLine>)}
        </HudBox>
        <HudBox $mono $x={3623} $y={132} $w={190} $h={76} $lh={19} $pad="9px 14px">
          <HudLine $h={19} $icon={27}><span>🌌</span>External</HudLine>
          <HudLine $h={19} $icon={27}><span>📍</span>X: 3208, Y: -460</HudLine>
          <HudLine $h={19} $icon={27}><span>🔍</span>120%</HudLine>
        </HudBox>
        <UniversalMinimap />
      </Canvas>
      <Chrome>
        <TopBar>
          <Brand><BrandIcon>🌌</BrandIcon>UniversalDesktop<Version>v2.1</Version></Brand>
          <Nav>{navItems.map(([label, w, muted]) => <NavButton key={label} $w={w} $muted={muted}>{label}</NavButton>)}</Nav>
          <TopRight>
            <ZoomBox><ZoomGlyph>➖</ZoomGlyph>120%<ZoomGlyph>➕</ZoomGlyph></ZoomBox>
            <Logout>🚪 Logout</Logout>
          </TopRight>
        </TopBar>
        <PanelRow>
          <Toolbox>
            <ToolboxHead><HeadIcon $w={39}>🧰</HeadIcon>Werkzeugkasten<CloseMark size={13} /></ToolboxHead>
            <ToolGrid>
              {tools.map(([icon, label, edge]) => <Tool key={label} $edge={edge}><ToolIcon>{icon}</ToolIcon>{label}</Tool>)}
            </ToolGrid>
            <Motto><b>µ2 WIND (☴) - Views/UI Creation</b>Folgt Raimunds Bagua-System mit<br />algebraischen Transistoren</Motto>
          </Toolbox>
          <Spacer />
          <ContextManager />
          <Assistant />
        </PanelRow>
      </Chrome>
    </Screen>
  );
}
